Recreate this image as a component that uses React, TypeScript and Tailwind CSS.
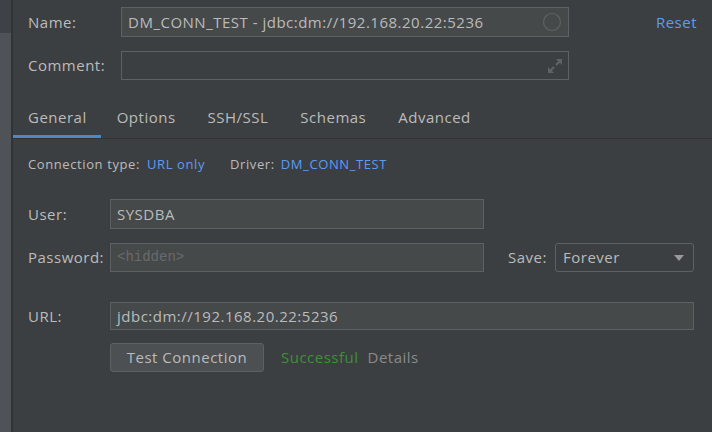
const font = { fontFamily: '"Open Sans", "Noto Sans", sans-serif' };

function Field({ className, children }: { className: string; children?: React.ReactNode }) {
  return (
    <div className={`flex items-center border border-[#5e6161] bg-[#45494a] px-[6px] text-[15px] text-[#bbbbbb] ${className}`}>
      {children}
    </div>
  );
}

export default function App() {
  const tabs = ['General', 'Options', 'SSH/SSL', 'Schemas', 'Advanced'];
  return (
    <div className="flex h-[432px] w-[712px] overflow-hidden bg-[#3c3f41] tracking-[0.5px] text-[#bbbbbb]" style={font}>
      <div className="flex w-[13px] shrink-0 flex-col border-r-2 border-[#313335]">
        <div className="h-[33px] bg-[#3e4146]" />
        <div className="flex-1 bg-[#4f5257]" />
      </div>

      <div className="flex flex-1 flex-col">
        <div className="mt-[7px] flex h-[30px] items-center">
          <span className="w-[108px] pl-[15px] text-[15px]">Name:</span>
          <Field className="h-[30px] w-[448px] justify-between">
            <span className="whitespace-nowrap">DM_CONN_TEST - jdbc:dm://192.168.20.22:5236</span>
            <svg width="20" height="20" viewBox="0 0 20 20">
              <circle cx="10" cy="10" r="8.5" fill="none" stroke="#5f6262" strokeWidth="1.2" />
            </svg>
          </Field>
          <span className="ml-auto mr-[15px] text-[15px] text-[#589df6]">Reset</span>
        </div>

        <div className="mt-[14px] flex h-[29px] items-center">
          <span className="w-[108px] pl-[15px] text-[15px]">Comment:</span>
          <div className="flex h-[29px] w-[448px] items-center justify-end border border-[#5e6161] pr-[5px]">
            <svg width="16" height="16" viewBox="0 0 16 16" fill="#5f6262">
              <path d="M9 1h6v6l-2.2-2.2-3 3-1.6-1.6 3-3z" />
              <path d="M7 15H1V9l2.2 2.2 3-3 1.6 1.6-3 3z" />
            </svg>
          </div>
        </div>

        <div className="mt-[19px] flex h-[40px] items-stretch border-b border-[#323232]">
          {tabs.map((t, i) => (
            <div
              key={t}
              className={`flex items-center text-[15px] ${i === 0 ? 'border-b-[3px] border-[#4a88c7] pl-[15px] pr-[14px]' : 'px-[16px] pb-[3px]'}`}
            >
              {t}
            </div>
          ))}
        </div>

        <div className="mt-[16px] flex h-[20px] items-center pl-[15px] text-[13px] tracking-[0.6px]">
          <span>Connection type:</span>
          <span className="ml-[7px] text-[#589df6]">URL only</span>
          <span className="ml-[25px]">Driver:</span>
          <span className="ml-[6px] text-[#589df6]">DM_CONN_TEST</span>
        </div>

        <div className="mt-[24px] flex h-[30px] items-center">
          <span className="w-[97px] pl-[15px] text-[15px]">User:</span>
          <Field className="h-[30px] w-[374px]">SYSDBA</Field>
        </div>

        <div className="mt-[14px] flex h-[29px] items-center">
          <span className="w-[97px] pl-[15px] text-[15px]">Password:</span>
          <Field className="h-[29px] w-[374px]">
            <span className="text-[14px] tracking-normal text-[#6a6a6a]" style={{ fontFamily: '"Liberation Mono", monospace' }}>
              &lt;hidden&gt;
            </span>
          </Field>
          <span className="ml-[24px] w-[47px] text-[15px]">Save:</span>
          <div className="flex h-[29px] w-[139px] items-center justify-between rounded-[3px] border border-[#5e6161] pl-[7px] pr-[9px] text-[15px]">
            <span>Forever</span>
            <svg width="10" height="6" viewBox="0 0 10 6">
              <path d="M0 0h10L5 6z" fill="#9a9a9a" />
            </svg>
          </div>
        </div>

        <div className="mt-[30px] flex h-[28px] items-center">
          <span className="w-[97px] pl-[15px] text-[15px]">URL:</span>
          <Field className="h-[28px] w-[584px]">jdbc:dm://192.168.20.22:5236</Field>
        </div>

        <div className="mt-[13px] flex h-[29px] items-center pl-[97px]">
          <div className="flex h-[29px] w-[154px] items-center justify-center rounded-[3px] border border-[#5e6161] bg-[#4c5052] text-[15px]">
            Test Connection
          </div>
          <span className="ml-[17px] text-[15px] text-[#3f8f37]">Successful</span>
          <span className="ml-[9px] text-[15px] text-[#8a8a8a]">Details</span>
        </div>
      </div>
    </div>
  );
}
